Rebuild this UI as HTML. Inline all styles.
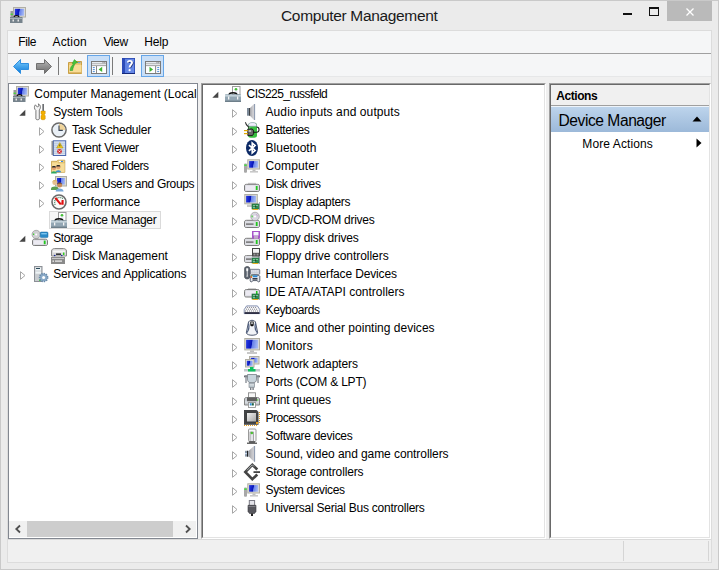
<!DOCTYPE html>
<html><head><meta charset="utf-8">
<style>
*{margin:0;padding:0;box-sizing:border-box}
html,body{width:719px;height:570px;overflow:hidden;background:#ebebeb}
body{position:relative;font-family:"Liberation Sans",sans-serif;color:#000}
.a{position:absolute}
.t{position:absolute;white-space:nowrap;font-size:12px;line-height:18px;height:18px;color:#000}
svg{position:absolute;overflow:visible}
</style></head><body>
<svg width="0" height="0" style="position:absolute;left:0;top:0"><defs>
<linearGradient id="scr" x1="0" y1="0" x2="1" y2="0.12"><stop offset="0" stop-color="#2a3ee0"/><stop offset="0.25" stop-color="#1828d0"/><stop offset="0.5" stop-color="#0614b4"/><stop offset="0.56" stop-color="#6680ea"/><stop offset="1" stop-color="#a4b8f4"/></linearGradient>
</defs></svg>
<!-- outer frame -->
<div class="a" style="left:0;top:0;width:719px;height:570px;border:1px solid #c9c9c9;background:#ebebeb"></div>
<!-- app icon -->
<svg style="left:10px;top:7px" width="16" height="16" viewBox="0 0 16 16"><rect x="3.5" y="0.5" width="12" height="9.5" fill="#e2e0d6" stroke="#b0aea4"/>
<rect x="4.8" y="1.8" width="9.4" height="6.9" fill="url(#scr)"/>
<rect x="0.5" y="4" width="2.5" height="6" fill="#9a9a9a"/><rect x="0.6" y="6.6" width="2.3" height="1.4" fill="#49d23c"/>
<path d="M4 10.5C4 8 9 8 9 10.5" fill="none" stroke="#111" stroke-width="1.2"/>
<rect x="0" y="10" width="12.5" height="6" fill="#76838c"/><rect x="0" y="11" width="12.5" height="1" fill="#a8b2b8"/>
<rect x="2.5" y="12.5" width="1.5" height="2" fill="#e6e6e6"/><rect x="7.5" y="12.5" width="1.5" height="2" fill="#e6e6e6"/></svg>
<div class="t" style="left:281px;top:5.5px;font-size:15.5px;font-weight:400;line-height:20px;height:20px;color:#1a1a1a;letter-spacing:-0.334px">Computer Management</div>
<!-- window buttons -->
<div class="a" style="left:623px;top:13px;width:9px;height:2px;background:#111"></div>
<div class="a" style="left:649px;top:7px;width:10px;height:9px;border:1px solid #111;border-top-width:2px"></div>
<div class="a" style="left:667px;top:1px;width:45px;height:20px;background:#bababa"></div>
<svg style="left:686px;top:8px" width="8" height="8" viewBox="0 0 8 8"><path d="M0.5 0.5L7.5 7.5M7.5 0.5L0.5 7.5" stroke="#fff" stroke-width="1.3"/></svg>

<!-- menu bar -->
<div class="a" style="left:7px;top:30px;width:705px;height:533px;background:#f0f0f0;border:1px solid #dcdcdc"></div>
<div class="a" style="left:8px;top:31px;width:703px;height:45px;background:#f5f6f7"></div>
<div class="a" style="left:8px;top:53px;width:703px;height:1px;background:#a0a0a0"></div>
<div class="a" style="left:8px;top:76px;width:703px;height:1px;background:#e6e7e8"></div>
<div class="t" style="left:18.3px;top:33px;font-size:12px;font-weight:400;line-height:18px;height:18px;color:#000;letter-spacing:-0.411px">File</div>
<div class="t" style="left:52.5px;top:33px;font-size:12px;font-weight:400;line-height:18px;height:18px;color:#000;letter-spacing:0.157px">Action</div>
<div class="t" style="left:103.4px;top:33px;font-size:12px;font-weight:400;line-height:18px;height:18px;color:#000;letter-spacing:-0.374px">View</div>
<div class="t" style="left:144.3px;top:33px;font-size:12px;font-weight:400;line-height:18px;height:18px;color:#000;letter-spacing:-0.147px">Help</div>

<!-- toolbar -->
<svg style="left:13px;top:59px" width="16" height="15" viewBox="0 0 16 15">
 <defs><linearGradient id="gb" x1="0" y1="0" x2="0" y2="1"><stop offset="0" stop-color="#7fd0ff"/><stop offset="1" stop-color="#0a78d8"/></linearGradient></defs>
 <path d="M0.5 7.5L7.5 0.5V4.5H15.5V10.5H7.5V14.5Z" fill="url(#gb)" stroke="#2f8fe0" stroke-width="1"/>
</svg>
<svg style="left:36px;top:59px" width="16" height="15" viewBox="0 0 16 15">
 <defs><linearGradient id="gg" x1="0" y1="0" x2="0" y2="1"><stop offset="0" stop-color="#b8b8b8"/><stop offset="1" stop-color="#6a6a6a"/></linearGradient></defs>
 <path d="M15.5 7.5L8.5 0.5V4.5H0.5V10.5H8.5V14.5Z" fill="url(#gg)" stroke="#707070" stroke-width="1"/>
</svg>
<div class="a" style="left:58px;top:57px;width:1px;height:18px;background:#7a7a7a"></div>
<svg style="left:68px;top:59px" width="15" height="16" viewBox="0 0 15 16">
 <path d="M0.5 3.5H6L7 2.5H13.5V14.5H0.5Z" fill="#eec772" stroke="#c49838" stroke-width="0.9"/>
 <rect x="1" y="6" width="12.5" height="8" fill="#f8dc96"/><rect x="1" y="13.2" width="12.5" height="1" fill="#d8b060"/>
 <rect x="10" y="3.2" width="2.5" height="1" fill="#5a9ae0"/>
 <path d="M2 11.5C2.2 8.6 3.6 6.4 5.4 5.2L4.2 4.4L6.4 0.6L9.8 3.6L7.6 4.2C6.4 5.6 5 8.2 4.6 11.5Z" fill="#46c23c" stroke="#2a9a24" stroke-width="0.5"/>
</svg>
<div class="a" style="left:87px;top:55px;width:23px;height:22px;background:#c9dff7;border:1px solid #66a6e8"></div>
<svg style="left:91px;top:61px" width="16" height="13" viewBox="0 0 16 13">
 <rect x="0.5" y="0.5" width="15" height="12" fill="#fff" stroke="#7b7b7b"/>
 <rect x="1" y="1" width="14" height="1.5" fill="#e6eaee"/><rect x="1" y="2.5" width="14" height="0.8" fill="#8a8a8a"/>
 <rect x="11.5" y="1.2" width="1" height="1" fill="#777"/><rect x="13.3" y="1.2" width="1" height="1" fill="#777"/>
 <rect x="1" y="3.3" width="14" height="1" fill="#e6eaee"/><rect x="1" y="4.3" width="14" height="0.8" fill="#8a8a8a"/>
 <rect x="5" y="5" width="0.9" height="7.5" fill="#7b7b7b"/>
 <rect x="1.8" y="6.2" width="2" height="0.9" fill="#3a7fd0"/><rect x="1.8" y="8.2" width="2" height="0.9" fill="#3a7fd0"/><rect x="1.8" y="10.2" width="2" height="0.9" fill="#3a7fd0"/>
 <path d="M7.6 8.4L11.2 5.8V11Z" fill="#3cb52f"/>
</svg>
<div class="a" style="left:112px;top:57px;width:1px;height:18px;background:#7a7a7a"></div>
<svg style="left:122px;top:58px" width="13" height="16" viewBox="0 0 13 16">
 <defs><linearGradient id="gh" x1="0" y1="0" x2="1" y2="0"><stop offset="0" stop-color="#5a7ee0"/><stop offset="1" stop-color="#6a8ce8"/></linearGradient></defs>
 <rect x="0" y="0" width="13" height="16" fill="url(#gh)"/>
 <rect x="0" y="0" width="3" height="16" fill="#2d4cb8"/>
 <rect x="0" y="0" width="13" height="0.8" fill="#2a48b0"/><rect x="12.2" y="0" width="0.8" height="16" fill="#2a48b0"/>
 <rect x="0" y="15" width="13" height="1" fill="#14287a"/>
 <path d="M6.2 4.6C6.2 2.6 10.2 2.4 10.2 4.8C10.2 6.6 7.8 6.8 7.8 9.6" fill="none" stroke="#1a2a70" stroke-width="1.6" transform="translate(0.6 0.5)"/>
 <path d="M5.8 4.6C5.8 2.4 10 2.2 10 4.8C10 6.6 7.6 6.8 7.6 9.6" fill="none" stroke="#fff" stroke-width="1.9"/>
 <circle cx="7.6" cy="12.2" r="1.1" fill="#fff"/>
</svg>
<div class="a" style="left:141px;top:55px;width:23px;height:22px;background:#c9dff7;border:1px solid #66a6e8"></div>
<svg style="left:145px;top:61px" width="16" height="13" viewBox="0 0 16 13">
 <rect x="0.5" y="0.5" width="15" height="12" fill="#fff" stroke="#7b7b7b"/>
 <rect x="1" y="1" width="14" height="1.5" fill="#e6eaee"/><rect x="1" y="2.5" width="14" height="0.8" fill="#8a8a8a"/>
 <rect x="11.5" y="1.2" width="1" height="1" fill="#777"/><rect x="13.3" y="1.2" width="1" height="1" fill="#777"/>
 <rect x="1" y="3.3" width="14" height="1" fill="#e6eaee"/><rect x="1" y="4.3" width="14" height="0.8" fill="#8a8a8a"/>
 <rect x="10.2" y="5" width="0.9" height="7.5" fill="#7b7b7b"/>
 <rect x="12.2" y="6.2" width="2" height="0.9" fill="#3a7fd0"/><rect x="12.2" y="8.2" width="2" height="0.9" fill="#3a7fd0"/><rect x="12.2" y="10.2" width="2" height="0.9" fill="#3a7fd0"/>
 <path d="M4.5 5.8L8.1 8.4L4.5 11Z" fill="#3cb52f"/>
</svg>

<!-- gap band -->


<!-- LEFT PANE -->
<div class="a" style="left:8px;top:83px;width:190px;height:456px;background:#fff;border:1px solid #828790"></div>
<div class="a" style="left:9px;top:84px;width:188px;height:437px;overflow:hidden"><div class="a" style="left:-9px;top:-84px;width:719px;height:570px">

<svg style="left:13px;top:86px" width="16" height="16" viewBox="0 0 16 16"><rect x="3.5" y="0.5" width="12" height="9.5" fill="#e2e0d6" stroke="#b0aea4"/>
<rect x="4.8" y="1.8" width="9.4" height="6.9" fill="url(#scr)"/>
<rect x="0.5" y="4" width="2.5" height="6" fill="#9a9a9a"/><rect x="0.6" y="6.6" width="2.3" height="1.4" fill="#49d23c"/>
<path d="M4 10.5C4 8 9 8 9 10.5" fill="none" stroke="#111" stroke-width="1.2"/>
<rect x="0" y="10" width="12.5" height="6" fill="#76838c"/><rect x="0" y="11" width="12.5" height="1" fill="#a8b2b8"/>
<rect x="2.5" y="12.5" width="1.5" height="2" fill="#e6e6e6"/><rect x="7.5" y="12.5" width="1.5" height="2" fill="#e6e6e6"/></svg>
<div class="t" style="left:34.3px;top:85px;letter-spacing:0.008px">Computer Management (Local</div>
<svg style="left:19px;top:110px" width="7" height="6" viewBox="0 0 7 6"><path d="M0.3 5.8H6.3V-0.2Z" fill="#454545"/></svg>
<svg style="left:34px;top:104px" width="16" height="16" viewBox="0 0 16 16"><path d="M1.9 15V6.4C0.1 5.2 -0.1 2.4 1.4 0.8L3.3 3L5 1.8L4.3 -0.1C6.4 0.6 7.3 3.6 5.3 6V15C5.3 16 1.9 16 1.9 15Z" fill="#f4f4f4" stroke="#6c6c6c" stroke-width="0.9"/>
<rect x="8.4" y="0" width="1.5" height="7.2" fill="#5e6064"/>
<path d="M7 7.1H11.2V9.8L10.3 10.5V11L11.2 11.6V15C11.2 16 7 16 7 15V11.6L7.9 11V10.5L7 9.8Z" fill="#f2b000" stroke="#c88a00" stroke-width="0.5"/></svg>
<div class="t" style="left:53.2px;top:103px;letter-spacing:-0.137px">System Tools</div>
<svg style="left:39px;top:127px" width="6" height="9" viewBox="0 0 6 9"><path d="M0.5 0.7L5 4.5L0.5 8.3Z" fill="#fff" stroke="#a6a6a6" stroke-width="1"/></svg>
<svg style="left:51px;top:122px" width="16" height="16" viewBox="0 0 16 16"><circle cx="8" cy="8" r="7.1" fill="#eaf0f6" stroke="#6a6a6a" stroke-width="1.5"/>
<path d="M8 1.8A6.2 6.2 0 0 1 14.2 8H8Z" fill="#f0d49a"/>
<path d="M8 3.4V8.4H11.8" fill="none" stroke="#3a4658" stroke-width="1.1"/></svg>
<div class="t" style="left:72px;top:121px;letter-spacing:-0.218px">Task Scheduler</div>
<svg style="left:39px;top:145px" width="6" height="9" viewBox="0 0 6 9"><path d="M0.5 0.7L5 4.5L0.5 8.3Z" fill="#fff" stroke="#a6a6a6" stroke-width="1"/></svg>
<svg style="left:51px;top:140px" width="16" height="16" viewBox="0 0 16 16"><rect x="2.3" y="0.8" width="12.4" height="14.7" fill="#dde6f2" stroke="#4a66ae" stroke-width="1"/>
<path d="M3 3.2H14M3 5.2H14M3 7.2H14M3 9.2H14M3 11.2H14M3 13.2H14" stroke="#aabdd8" stroke-width="0.8"/>
<path d="M1.3 1.5V15" stroke="#404040" stroke-width="1.8" stroke-dasharray="1 1"/>
<path d="M8.8 2.6L12 8H5.6Z" fill="#f2cc1c" stroke="#a88a10" stroke-width="0.5"/><rect x="8.4" y="4.4" width="0.9" height="2" fill="#333"/>
<circle cx="8.5" cy="11.4" r="2.4" fill="#d22a2e"/><path d="M7.5 10.4L9.5 12.4M9.5 10.4L7.5 12.4" stroke="#fff" stroke-width="0.8"/></svg>
<div class="t" style="left:72px;top:139px;letter-spacing:-0.315px">Event Viewer</div>
<svg style="left:39px;top:163px" width="6" height="9" viewBox="0 0 6 9"><path d="M0.5 0.7L5 4.5L0.5 8.3Z" fill="#fff" stroke="#a6a6a6" stroke-width="1"/></svg>
<svg style="left:51px;top:158px" width="16" height="16" viewBox="0 0 16 16"><path d="M0.5 3.3H6L6.8 2.2H13.8V14.3H0.5Z" fill="#f2d386" stroke="#c29e48" stroke-width="0.8"/>
<rect x="1" y="5" width="12.5" height="9" fill="#f6dc98"/><rect x="6.8" y="4.6" width="7" height="0.6" fill="#c8a858"/>
<rect x="8" y="2.9" width="2" height="1.1" fill="#fff"/><rect x="10" y="2.9" width="2" height="1.1" fill="#3a88e0"/>
<path d="M4.5 14.3C4.5 11.5 10.2 11.5 10.2 14.3Z" fill="#3a90d0"/><circle cx="7.3" cy="9.2" r="2.1" fill="#e0a070"/><path d="M5.2 8.4C5.2 6.6 9.4 6.6 9.4 8.4Z" fill="#2a2a2a"/>
<path d="M0 15.6C0 12.6 5.8 12.6 5.8 15.6Z" fill="#2ea860"/><circle cx="2.9" cy="10.2" r="2.1" fill="#e0a070"/><path d="M0.8 9.4C0.8 7.6 5 7.6 5 9.4Z" fill="#2a2a2a"/></svg>
<div class="t" style="left:72px;top:157px;letter-spacing:-0.382px">Shared Folders</div>
<svg style="left:39px;top:181px" width="6" height="9" viewBox="0 0 6 9"><path d="M0.5 0.7L5 4.5L0.5 8.3Z" fill="#fff" stroke="#a6a6a6" stroke-width="1"/></svg>
<svg style="left:51px;top:176px" width="16" height="16" viewBox="0 0 16 16"><rect x="4.5" y="0.5" width="11" height="9.5" fill="#dcdbd2" stroke="#aeaca2"/><rect x="6" y="2" width="8" height="6.5" fill="url(#scr)"/>
<path d="M0 12.8C0 9.6 7.6 9.6 7.6 12.8V14H0Z" fill="#5e9e50"/><circle cx="3.9" cy="6.6" r="2.5" fill="#e6c090"/><path d="M1.4 6.2C1.4 3.4 6.4 3.4 6.4 6.2L5.6 5.2H2.2Z" fill="#d8b060"/>
<path d="M4.6 15.6C4.6 11.6 12.6 11.6 12.6 15.6Z" fill="#78a8d8"/><circle cx="8.6" cy="9" r="2.5" fill="#c88a58"/><path d="M6.1 8.6C6.1 5.8 11.1 5.8 11.1 8.6L10.3 7.6H6.9Z" fill="#3a2a20"/></svg>
<div class="t" style="left:72px;top:175px;letter-spacing:-0.323px">Local Users and Groups</div>
<svg style="left:39px;top:199px" width="6" height="9" viewBox="0 0 6 9"><path d="M0.5 0.7L5 4.5L0.5 8.3Z" fill="#fff" stroke="#a6a6a6" stroke-width="1"/></svg>
<svg style="left:51px;top:194px" width="16" height="16" viewBox="0 0 16 16"><circle cx="8" cy="8" r="7" fill="#fafaf8" stroke="#6a6a6a" stroke-width="1.6"/>
<path d="M4.2 10.8A5 5 0 0 1 11.8 4.6" fill="none" stroke="#3a7a5a" stroke-width="1.3" stroke-dasharray="0.9 0.9"/>
<path d="M4.3 3.8L9.8 10.4" stroke="#e01010" stroke-width="2.1"/><path d="M10.6 6H12.6V10.8H10.2Z" fill="#e01010"/></svg>
<div class="t" style="left:72px;top:193px;letter-spacing:-0.064px">Performance</div>

<div class="a" style="left:49px;top:211px;width:112px;height:18px;background:#f7f7f7;border:1px solid #dadada"></div>
<svg style="left:51px;top:212px" width="16" height="16" viewBox="0 0 16 16"><rect x="7.5" y="0.5" width="7.5" height="8" fill="#fff" stroke="#9b9b9b"/>
<rect x="9.5" y="2.5" width="3" height="6" fill="#ecebf4"/><circle cx="11" cy="3.3" r="1.3" fill="#47c238"/>
<path d="M4 9C4 6 12 6 12 9" fill="none" stroke="#111" stroke-width="1.4"/>
<rect x="0" y="8.3" width="16" height="7.7" rx="0.8" fill="#93a6b3"/><rect x="0" y="9" width="16" height="1.6" fill="#c4d2da"/>
<rect x="0" y="14.6" width="16" height="1.4" fill="#6e7f8a"/>
<rect x="3" y="10.5" width="1.3" height="3" fill="#f2f2f2"/><rect x="12" y="10.5" width="1.3" height="3" fill="#f2f2f2"/></svg>
<div class="t" style="left:72.5px;top:211px;letter-spacing:-0.241px">Device Manager</div>
<svg style="left:19px;top:236px" width="7" height="6" viewBox="0 0 7 6"><path d="M0.3 5.8H6.3V-0.2Z" fill="#454545"/></svg>
<svg style="left:32px;top:230px" width="16" height="16" viewBox="0 0 16 16"><circle cx="4.2" cy="4.5" r="4.2" fill="#cfcfd2" stroke="#8a8a8a" stroke-width="0.6"/><circle cx="4.2" cy="4.5" r="1" fill="#fff"/><rect x="1" y="3.5" width="1.2" height="1.5" fill="#40d030"/>
<rect x="8.2" y="2" width="7.8" height="5.6" rx="1" fill="#2a8ac8" stroke="#1a6aa0" stroke-width="0.5"/><rect x="9.3" y="3" width="5.5" height="1.4" fill="#7cc4ee"/>
<path d="M0.5 11C0.5 9.8 1.3 9.2 2.5 9.2H13.5C14.7 9.2 15.5 9.8 15.5 11V14C15.5 15 14.8 15.5 13.8 15.5H2.2C1.2 15.5 0.5 15 0.5 14Z" fill="#dcdde3" stroke="#7b7b7b"/>
<rect x="2" y="10.5" width="9.5" height="3.5" fill="#eceaf2"/><rect x="11.8" y="10.6" width="1.8" height="3.6" fill="#22c81e"/></svg>
<div class="t" style="left:53.2px;top:229px;letter-spacing:-0.376px">Storage</div>

<svg style="left:51px;top:248px" width="16" height="16" viewBox="0 0 16 16"><path d="M0.5 3C0.5 1.5 2 0.5 3.5 0.5H12.5C14 0.5 15.5 1.5 15.5 3V8H0.5Z" fill="#d8d8d8" stroke="#8a8a8a"/>
<rect x="2" y="2.5" width="12" height="2" fill="#f6f6f6"/><rect x="5" y="5.5" width="5" height="1.3" fill="#111"/>
<circle cx="3.7" cy="7.5" r="0.8" fill="#1a2aa0"/><circle cx="10.7" cy="7.5" r="0.8" fill="#1a2aa0"/><rect x="12" y="4.5" width="1.4" height="2.5" fill="#30d020"/>
<rect x="0" y="9" width="14" height="7" fill="#8a8a8a"/><rect x="1" y="10" width="12" height="1" fill="#c8c8c8"/><rect x="4" y="12.5" width="7" height="1.2" fill="#f0f0f0"/><rect x="1.5" y="12.5" width="1.5" height="1.3" fill="#f0f0f0"/></svg>
<div class="t" style="left:72px;top:247px;letter-spacing:-0.061px">Disk Management</div>
<svg style="left:20px;top:271px" width="6" height="9" viewBox="0 0 6 9"><path d="M0.5 0.7L5 4.5L0.5 8.3Z" fill="#fff" stroke="#a6a6a6" stroke-width="1"/></svg>
<svg style="left:34px;top:266px" width="16" height="16" viewBox="0 0 16 16"><rect x="0.5" y="0.5" width="7.5" height="15" fill="#c8ccd0" stroke="#8c9096"/>
<rect x="1.5" y="1.5" width="5.5" height="3" fill="#eef4f6"/><rect x="2" y="2" width="4" height="1" fill="#2a4a5a"/>
<rect x="1.5" y="5.5" width="5.5" height="2.2" fill="#eef4f6"/><rect x="5" y="13.5" width="2.5" height="1.4" fill="#40d030"/>
<circle cx="9.6" cy="11.5" r="4" fill="#8aaac8" stroke="#6a8aaa" stroke-width="1.6" stroke-dasharray="1.3 1"/><circle cx="9.6" cy="11.5" r="1.5" fill="#fff"/></svg>
<div class="t" style="left:53.2px;top:265px;letter-spacing:-0.138px">Services and Applications</div>
</div></div>
<!-- left scrollbar -->
<div class="a" style="left:9px;top:521px;width:187px;height:16px;background:#f0f0f0"></div>
<div class="a" style="left:27px;top:521px;width:146px;height:16px;background:#cdcdcd"></div>
<svg style="left:15px;top:525px" width="6" height="8" viewBox="0 0 6 8"><path d="M5 0.5L1.3 4L5 7.5" fill="none" stroke="#505050" stroke-width="1.8"/></svg>
<svg style="left:185px;top:525px" width="6" height="8" viewBox="0 0 6 8"><path d="M1 0.5L4.7 4L1 7.5" fill="none" stroke="#505050" stroke-width="1.8"/></svg>
<!-- MIDDLE PANE -->
<div class="a" style="left:201px;top:83px;width:345px;height:456px;background:#fff;border-left:1px solid #a0a0a0;border-top:1px solid #a0a0a0;border-right:1px solid #fff;border-bottom:1px solid #fff"></div>
<div class="a" style="left:202px;top:84px;width:343px;height:454px;border-left:1px solid #696969;border-top:1px solid #696969;border-right:1px solid #e3e3e3;border-bottom:1px solid #e3e3e3"></div>
<div class="a" style="left:203px;top:85px;width:341px;height:452px;overflow:hidden"><div class="a" style="left:-203px;top:-85px;width:719px;height:570px">
<svg style="left:212px;top:92px" width="7" height="6" viewBox="0 0 7 6"><path d="M0.3 5.8H6.3V-0.2Z" fill="#454545"/></svg>
<svg style="left:225px;top:86px" width="16" height="16" viewBox="0 0 16 16"><rect x="7.5" y="0.5" width="7.5" height="8" fill="#fff" stroke="#9b9b9b"/>
<rect x="9.5" y="2.5" width="3" height="6" fill="#ecebf4"/><circle cx="11" cy="3.3" r="1.3" fill="#47c238"/>
<path d="M4 9C4 6 12 6 12 9" fill="none" stroke="#111" stroke-width="1.4"/>
<rect x="0" y="8.3" width="16" height="7.7" rx="0.8" fill="#93a6b3"/><rect x="0" y="9" width="16" height="1.6" fill="#c4d2da"/>
<rect x="0" y="14.6" width="16" height="1.4" fill="#6e7f8a"/>
<rect x="3" y="10.5" width="1.3" height="3" fill="#f2f2f2"/><rect x="12" y="10.5" width="1.3" height="3" fill="#f2f2f2"/></svg>
<div class="t" style="left:246.5px;top:85px;letter-spacing:-0.535px">CIS225_russfeld</div>
<svg style="left:232px;top:109px" width="6" height="9" viewBox="0 0 6 9"><path d="M0.5 0.7L5 4.5L0.5 8.3Z" fill="#fff" stroke="#a6a6a6" stroke-width="1"/></svg>
<svg style="left:244px;top:104px" width="16" height="16" viewBox="0 0 16 16"><defs><linearGradient id="spk" x1="0" y1="0" x2="1" y2="0"><stop offset="0" stop-color="#a4a4a8"/><stop offset="0.5" stop-color="#c8c8cc"/><stop offset="1" stop-color="#d8d8dc"/></linearGradient></defs>
<rect x="3" y="4" width="3" height="7.7" fill="#7d8a98"/><rect x="5.3" y="4" width="0.8" height="7.7" fill="#222"/>
<path d="M6 4L10 0H11V16H10L6 11.7Z" fill="url(#spk)"/><rect x="10.2" y="0" width="0.9" height="16" fill="#8090a8"/></svg>
<div class="t" style="left:265.5px;top:103px;letter-spacing:0.095px">Audio inputs and outputs</div>
<svg style="left:232px;top:127px" width="6" height="9" viewBox="0 0 6 9"><path d="M0.5 0.7L5 4.5L0.5 8.3Z" fill="#fff" stroke="#a6a6a6" stroke-width="1"/></svg>
<svg style="left:244px;top:122px" width="16" height="16" viewBox="0 0 16 16"><path d="M4 3.5C4 1.2 6 0.5 8.5 0.5C11 0.5 13 1.2 13 3.5V13.5C13 15.5 11 15.8 8.5 15.8C6 15.8 4 15.5 4 13.5Z" fill="#38c040"/>
<path d="M4.3 4.2C4.3 1.3 6 0.6 8.5 0.6C11 0.6 12.7 1.3 12.7 4.2Z" fill="#f0eefa" stroke="#8a8ab0" stroke-width="0.5"/>
<rect x="5" y="5" width="1.2" height="9" fill="#8ae08a"/>
<path d="M1.4 0.3C1.6 2.6 3.2 3.8 5.2 5.6" fill="none" stroke="#2a2a2a" stroke-width="1.1"/>
<path d="M9 10.2H12.8C15.8 10.2 15.8 5 12.6 5" fill="none" stroke="#1a1a1a" stroke-width="1.1"/>
<path d="M3.8 7H8.4L9.6 8.8V11.8L8.4 13.6H3.8Z" fill="#6a6a6a" stroke="#111" stroke-width="0.9"/><rect x="4.6" y="8" width="2.5" height="2" fill="#b8b8b8"/>
<rect x="0" y="8" width="3.8" height="1.2" fill="#e2a800"/><rect x="0" y="11" width="3.8" height="1.2" fill="#e2a800"/></svg>
<div class="t" style="left:265.5px;top:121px;letter-spacing:-0.384px">Batteries</div>
<svg style="left:232px;top:145px" width="6" height="9" viewBox="0 0 6 9"><path d="M0.5 0.7L5 4.5L0.5 8.3Z" fill="#fff" stroke="#a6a6a6" stroke-width="1"/></svg>
<svg style="left:244px;top:140px" width="16" height="16" viewBox="0 0 16 16"><ellipse cx="8" cy="8" rx="6" ry="8" fill="#0c2a66"/>
<path d="M4.9 5.2L11.1 10.4L8.2 13V3L11.1 5.6L4.9 10.8" fill="none" stroke="#fff" stroke-width="1.6"/></svg>
<div class="t" style="left:265.5px;top:139px;letter-spacing:0.020px">Bluetooth</div>
<svg style="left:232px;top:163px" width="6" height="9" viewBox="0 0 6 9"><path d="M0.5 0.7L5 4.5L0.5 8.3Z" fill="#fff" stroke="#a6a6a6" stroke-width="1"/></svg>
<svg style="left:244px;top:158px" width="16" height="16" viewBox="0 0 16 16"><rect x="3.8" y="1.8" width="11.7" height="9.2" fill="#e2e0d6" stroke="#b0aea4"/>
<rect x="5.1" y="3.1" width="9.1" height="6.6" fill="url(#scr)"/><rect x="0" y="5.5" width="3" height="9.2" rx="1" fill="#a8a8a8"/><rect x="0.3" y="6.5" width="2.4" height="1.4" fill="#3ee23a"/>
<rect x="8.5" y="11.5" width="3" height="1.5" fill="#bdbdbd"/><rect x="6" y="13" width="8" height="1.6" fill="#c8c8c8"/></svg>
<div class="t" style="left:265.5px;top:157px;letter-spacing:0.127px">Computer</div>
<svg style="left:232px;top:181px" width="6" height="9" viewBox="0 0 6 9"><path d="M0.5 0.7L5 4.5L0.5 8.3Z" fill="#fff" stroke="#a6a6a6" stroke-width="1"/></svg>
<svg style="left:244px;top:176px" width="16" height="16" viewBox="0 0 16 16"><rect x="4" y="6.8" width="8" height="1.6" fill="#d0d0d0"/><path d="M0.5 10C0.5 8.8 1.3 8.3 2.5 8.3H13.5C14.7 8.3 15.5 8.8 15.5 10V14C15.5 15 14.8 15.5 13.8 15.5H2.2C1.2 15.5 0.5 15 0.5 14Z" fill="#dcdde3" stroke="#7b7b7b"/>
<rect x="2" y="9.6" width="9.5" height="4.4" fill="#eceaf2"/><rect x="11.8" y="10" width="1.8" height="4" fill="#22c81e"/></svg>
<div class="t" style="left:265.5px;top:175px;letter-spacing:-0.326px">Disk drives</div>
<svg style="left:232px;top:199px" width="6" height="9" viewBox="0 0 6 9"><path d="M0.5 0.7L5 4.5L0.5 8.3Z" fill="#fff" stroke="#a6a6a6" stroke-width="1"/></svg>
<svg style="left:244px;top:194px" width="16" height="16" viewBox="0 0 16 16"><rect x="0.8" y="0.5" width="12.5" height="9.3" fill="#e2e0d6" stroke="#b0aea4"/>
<rect x="2.1" y="1.8" width="9.9" height="6.700000000000001" fill="url(#scr)"/><rect x="3" y="10.5" width="5" height="2.5" fill="#c8c8c8"/><rect x="8" y="10" width="7.3" height="5" fill="#2f8f52" stroke="#1d5f35" stroke-width="0.6"/>
<rect x="8.5" y="15" width="5.5" height="1" fill="#e8b020"/><rect x="15.2" y="8" width="0.8" height="8" fill="#9aa0b0"/>
<circle cx="10" cy="11.5" r="0.6" fill="#dfe"/><circle cx="13" cy="11.5" r="0.6" fill="#dfe"/><circle cx="10" cy="13.7" r="0.6" fill="#dfe"/><circle cx="11.7" cy="12.6" r="0.6" fill="#401020"/></svg>
<div class="t" style="left:265.5px;top:193px;letter-spacing:-0.287px">Display adapters</div>
<svg style="left:232px;top:217px" width="6" height="9" viewBox="0 0 6 9"><path d="M0.5 0.7L5 4.5L0.5 8.3Z" fill="#fff" stroke="#a6a6a6" stroke-width="1"/></svg>
<svg style="left:244px;top:212px" width="16" height="16" viewBox="0 0 16 16"><path d="M0.5 10C0.5 8.8 1.3 8.3 2.5 8.3H13.5C14.7 8.3 15.5 8.8 15.5 10V14C15.5 15 14.8 15.5 13.8 15.5H2.2C1.2 15.5 0.5 15 0.5 14Z" fill="#dcdde3" stroke="#7b7b7b"/>
<rect x="2" y="11.5" width="7.5" height="1.2" fill="#5a5a5a"/><rect x="11.8" y="10" width="1.8" height="4" fill="#22c81e"/>
<circle cx="11" cy="4.5" r="4.3" fill="#d8d6e0" stroke="#8a8a8a" stroke-width="0.6"/><circle cx="11" cy="4.5" r="1" fill="#fff"/><rect x="7.5" y="3.5" width="1.2" height="1.8" fill="#40d030"/><path d="M12 2L14 4.5" stroke="#c8a0d0" stroke-width="0.8"/></svg>
<div class="t" style="left:265.5px;top:211px;letter-spacing:-0.256px">DVD/CD-ROM drives</div>
<svg style="left:232px;top:235px" width="6" height="9" viewBox="0 0 6 9"><path d="M0.5 0.7L5 4.5L0.5 8.3Z" fill="#fff" stroke="#a6a6a6" stroke-width="1"/></svg>
<svg style="left:244px;top:230px" width="16" height="16" viewBox="0 0 16 16"><path d="M0.5 10C0.5 8.8 1.3 8.3 2.5 8.3H13.5C14.7 8.3 15.5 8.8 15.5 10V14C15.5 15 14.8 15.5 13.8 15.5H2.2C1.2 15.5 0.5 15 0.5 14Z" fill="#dcdde3" stroke="#7b7b7b"/>
<rect x="2" y="11.5" width="7.5" height="1.2" fill="#5a5a5a"/><rect x="11.8" y="10" width="1.8" height="4" fill="#22c81e"/>
<rect x="8" y="1" width="8" height="7.7" fill="#a655c8"/><rect x="9.5" y="2" width="5" height="3.5" fill="#f4f6fc"/><rect x="10" y="6" width="4" height="2.7" fill="#c0a8c8"/></svg>
<div class="t" style="left:265.5px;top:229px;letter-spacing:-0.164px">Floppy disk drives</div>
<svg style="left:232px;top:253px" width="6" height="9" viewBox="0 0 6 9"><path d="M0.5 0.7L5 4.5L0.5 8.3Z" fill="#fff" stroke="#a6a6a6" stroke-width="1"/></svg>
<svg style="left:244px;top:248px" width="16" height="16" viewBox="0 0 16 16"><path d="M0.5 9C0.5 7.8 1.3 7.5 2.5 7.5H13C14.2 7.5 15 8 15 9V13C15 14 14.3 14.5 13.3 14.5H2.2C1.2 14.5 0.5 14 0.5 13Z" fill="#dcdde3" stroke="#8b8b8b"/>
<rect x="2" y="10.5" width="5.5" height="1.2" fill="#5a5a5a"/>
<rect x="8" y="0" width="8" height="8.5" fill="#474747"/><rect x="9" y="1" width="6" height="3.8" fill="#f4f4f4"/><rect x="9.5" y="5.5" width="2" height="2" fill="#9a9a9a"/><rect x="12.5" y="5.5" width="2" height="2" fill="#9a9a9a"/><rect x="8" y="10" width="7.3" height="5" fill="#2f8f52" stroke="#1d5f35" stroke-width="0.6"/>
<rect x="8.5" y="15" width="5.5" height="1" fill="#e8b020"/><rect x="15.2" y="8" width="0.8" height="8" fill="#9aa0b0"/>
<circle cx="10" cy="11.5" r="0.6" fill="#dfe"/><circle cx="13" cy="11.5" r="0.6" fill="#dfe"/><circle cx="10" cy="13.7" r="0.6" fill="#dfe"/><circle cx="11.7" cy="12.6" r="0.6" fill="#401020"/></svg>
<div class="t" style="left:265.5px;top:247px;letter-spacing:-0.036px">Floppy drive controllers</div>
<svg style="left:232px;top:271px" width="6" height="9" viewBox="0 0 6 9"><path d="M0.5 0.7L5 4.5L0.5 8.3Z" fill="#fff" stroke="#a6a6a6" stroke-width="1"/></svg>
<svg style="left:244px;top:266px" width="16" height="16" viewBox="0 0 16 16"><rect x="6.3" y="3.3" width="9.4" height="5" rx="0.8" fill="#c8ccd8" stroke="#505868" stroke-width="0.7"/>
<path d="M7.3 5H15" stroke="#fff" stroke-width="1.1" stroke-dasharray="1.1 0.9"/><path d="M7.3 7.3H15" stroke="#f4f4f4" stroke-width="1" stroke-dasharray="1.3 0.7"/>
<path d="M0.6 2.5C0.6 -0.2 5.8 -0.2 5.8 2.5V11C5.8 13.6 0.6 13.6 0.6 11Z" fill="#5c6470" stroke="#30343c" stroke-width="0.6"/>
<path d="M2.2 2.2H4.2V4.5L3.6 5.5V9.5L4.2 10.5H2.2L2.8 9.5V5.5L2.2 4.5Z" fill="#fafafa"/>
<path d="M6.2 10.3C6.2 8.6 15.8 8.6 15.8 10.3V14.8C15.8 16.2 13.6 16.2 13.2 14.6H8.8C8.4 16.2 6.2 16.2 6.2 14.8Z" fill="#e4e8ee" stroke="#30384a" stroke-width="0.8"/>
<rect x="8.8" y="9.4" width="4.6" height="1.8" fill="#2a8ad8"/><circle cx="7.3" cy="11" r="0.9" fill="#e86020"/><circle cx="8" cy="9.8" r="0.6" fill="#60d040"/>
<rect x="8.5" y="12" width="5" height="1.6" fill="#383c48"/></svg>
<div class="t" style="left:265.5px;top:265px;letter-spacing:-0.149px">Human Interface Devices</div>
<svg style="left:232px;top:289px" width="6" height="9" viewBox="0 0 6 9"><path d="M0.5 0.7L5 4.5L0.5 8.3Z" fill="#fff" stroke="#a6a6a6" stroke-width="1"/></svg>
<svg style="left:244px;top:284px" width="16" height="16" viewBox="0 0 16 16"><rect x="4" y="4" width="8" height="1.6" fill="#d0d0d0"/>
<path d="M0.5 7.3C0.5 6 1.3 5.5 2.5 5.5H13.5C14.7 5.5 15.5 6 15.5 7.3V11.5C15.5 12.5 14.8 13 13.8 13H2.2C1.2 13 0.5 12.5 0.5 11.5Z" fill="#dcdde3" stroke="#7b7b7b"/>
<rect x="2" y="7" width="9.5" height="4.4" fill="#eceaf2"/><rect x="12" y="7" width="1.5" height="3" fill="#22c81e"/><rect x="8" y="10" width="7.3" height="5" fill="#2f8f52" stroke="#1d5f35" stroke-width="0.6"/>
<rect x="8.5" y="15" width="5.5" height="1" fill="#e8b020"/><rect x="15.2" y="8" width="0.8" height="8" fill="#9aa0b0"/>
<circle cx="10" cy="11.5" r="0.6" fill="#dfe"/><circle cx="13" cy="11.5" r="0.6" fill="#dfe"/><circle cx="10" cy="13.7" r="0.6" fill="#dfe"/><circle cx="11.7" cy="12.6" r="0.6" fill="#401020"/></svg>
<div class="t" style="left:265.5px;top:283px;letter-spacing:-0.006px">IDE ATA/ATAPI controllers</div>
<svg style="left:232px;top:307px" width="6" height="9" viewBox="0 0 6 9"><path d="M0.5 0.7L5 4.5L0.5 8.3Z" fill="#fff" stroke="#a6a6a6" stroke-width="1"/></svg>
<svg style="left:244px;top:302px" width="16" height="16" viewBox="0 0 16 16"><path d="M2.6 3.9H13.4L15.8 7.6V11.6H0.2V7.6Z" fill="#f4f4f6" stroke="#6a78a0" stroke-width="0.8"/><rect x="3" y="4.9" width="1" height="1" fill="#8a8a90"/><rect x="5" y="4.9" width="1" height="1" fill="#8a8a90"/><rect x="7" y="4.9" width="1" height="1" fill="#8a8a90"/><rect x="9" y="4.9" width="1" height="1" fill="#8a8a90"/><rect x="11" y="4.9" width="1" height="1" fill="#8a8a90"/><rect x="2" y="6.7" width="1" height="1" fill="#8a8a90"/><rect x="4" y="6.7" width="1" height="1" fill="#8a8a90"/><rect x="6" y="6.7" width="1" height="1" fill="#8a8a90"/><rect x="8" y="6.7" width="1" height="1" fill="#8a8a90"/><rect x="10" y="6.7" width="1" height="1" fill="#8a8a90"/><rect x="12" y="6.7" width="1" height="1" fill="#8a8a90"/><rect x="1" y="8.5" width="1" height="1" fill="#8a8a90"/><rect x="3" y="8.5" width="1" height="1" fill="#8a8a90"/><rect x="5" y="8.5" width="1" height="1" fill="#8a8a90"/><rect x="7" y="8.5" width="1" height="1" fill="#8a8a90"/><rect x="9" y="8.5" width="1" height="1" fill="#8a8a90"/><rect x="11" y="8.5" width="1" height="1" fill="#8a8a90"/><rect x="13" y="8.5" width="1" height="1" fill="#8a8a90"/>
<rect x="0.6" y="10.2" width="14.8" height="1.6" fill="#14142a"/></svg>
<div class="t" style="left:265.5px;top:301px;letter-spacing:-0.353px">Keyboards</div>
<svg style="left:232px;top:325px" width="6" height="9" viewBox="0 0 6 9"><path d="M0.5 0.7L5 4.5L0.5 8.3Z" fill="#fff" stroke="#a6a6a6" stroke-width="1"/></svg>
<svg style="left:244px;top:320px" width="16" height="16" viewBox="0 0 16 16"><path d="M4.3 3C4.3 -0.6 11.7 -0.6 11.7 3L13.6 12.4C14.2 16.2 1.8 16.2 2.4 12.4Z" fill="#f2f4f8" stroke="#3a4660" stroke-width="0.9"/>
<path d="M4.5 3.5C5.5 7 5 10 2.6 13" fill="none" stroke="#4a5a7c" stroke-width="1.2"/><path d="M11.5 3.5C10.5 7 11 10 13.4 13" fill="none" stroke="#4a5a7c" stroke-width="1.2"/>
<path d="M6.3 1.6H9.7V5C9.7 6.8 6.3 6.8 6.3 5Z" fill="#111"/><rect x="7.3" y="2.2" width="1.4" height="2" fill="#f0f0f0"/></svg>
<div class="t" style="left:265.5px;top:319px;letter-spacing:0.010px">Mice and other pointing devices</div>
<svg style="left:232px;top:343px" width="6" height="9" viewBox="0 0 6 9"><path d="M0.5 0.7L5 4.5L0.5 8.3Z" fill="#fff" stroke="#a6a6a6" stroke-width="1"/></svg>
<svg style="left:244px;top:338px" width="16" height="16" viewBox="0 0 16 16"><rect x="0.8" y="0.5" width="14.7" height="11.4" fill="#e2e0d6" stroke="#b0aea4"/>
<rect x="2.1" y="1.8" width="12.1" height="8.8" fill="url(#scr)"/><rect x="6" y="12.4" width="4" height="1.6" fill="#bdbdbd"/><rect x="3" y="14" width="10" height="2" fill="#c8c8c8"/></svg>
<div class="t" style="left:265.5px;top:337px;letter-spacing:0.161px">Monitors</div>
<svg style="left:232px;top:361px" width="6" height="9" viewBox="0 0 6 9"><path d="M0.5 0.7L5 4.5L0.5 8.3Z" fill="#fff" stroke="#a6a6a6" stroke-width="1"/></svg>
<svg style="left:244px;top:356px" width="16" height="16" viewBox="0 0 16 16"><rect x="5.5" y="0.5" width="9.5" height="7.5" fill="#e2e0d6" stroke="#b0aea4"/>
<rect x="6.8" y="1.8" width="6.9" height="4.9" fill="url(#scr)"/><rect x="1.5" y="3.5" width="8.5" height="7.5" fill="#e2e0d6" stroke="#b0aea4"/>
<rect x="2.8" y="4.8" width="5.9" height="4.9" fill="url(#scr)"/><rect x="0" y="13" width="16" height="2.5" fill="#c4c8cc"/>
<rect x="6" y="11" width="3.5" height="3" fill="#10c060"/><rect x="4" y="13" width="7.5" height="2.5" fill="#10c060"/></svg>
<div class="t" style="left:265.5px;top:355px;letter-spacing:-0.109px">Network adapters</div>
<svg style="left:232px;top:379px" width="6" height="9" viewBox="0 0 6 9"><path d="M0.5 0.7L5 4.5L0.5 8.3Z" fill="#fff" stroke="#a6a6a6" stroke-width="1"/></svg>
<svg style="left:244px;top:374px" width="16" height="16" viewBox="0 0 16 16"><rect x="0" y="1.5" width="16" height="1.8" fill="#6a6e74"/>
<rect x="1.3" y="1" width="1.4" height="8" fill="#8a9098"/><rect x="13.3" y="1" width="1.4" height="8" fill="#8a9098"/>
<path d="M3.5 0.5H12.5V5C12.5 8 11 8.8 8 8.8C5 8.8 3.5 8 3.5 5Z" fill="#c8d4dc" stroke="#7a8088" stroke-width="0.8"/>
<rect x="5" y="9" width="5.5" height="4.5" fill="#b8c4cc" stroke="#7a8088" stroke-width="0.6"/><rect x="5.5" y="10.5" width="4.5" height="0.8" fill="#eee"/>
<rect x="6" y="13.5" width="1.4" height="2.5" fill="#7a8088"/><rect x="8.4" y="13.5" width="1.4" height="2.5" fill="#7a8088"/></svg>
<div class="t" style="left:265.5px;top:373px;letter-spacing:-0.183px">Ports (COM &amp; LPT)</div>
<svg style="left:232px;top:397px" width="6" height="9" viewBox="0 0 6 9"><path d="M0.5 0.7L5 4.5L0.5 8.3Z" fill="#fff" stroke="#a6a6a6" stroke-width="1"/></svg>
<svg style="left:244px;top:392px" width="16" height="16" viewBox="0 0 16 16"><rect x="4.5" y="0.8" width="7" height="5" fill="#f6f6f6" stroke="#8a8a8a" stroke-width="0.9"/>
<path d="M0.5 7C0.5 6 1.5 5.5 2.5 5.5H13.5C14.5 5.5 15.5 6 15.5 7V13H0.5Z" fill="#c8ccd0" stroke="#7a7a7a" stroke-width="0.9"/>
<rect x="3" y="5.5" width="10" height="4" fill="#5e5e5e"/><rect x="1" y="9.5" width="14" height="1" fill="#e4e8ec"/><circle cx="13.5" cy="8" r="0.8" fill="#60e040"/>
<rect x="4.5" y="10.5" width="7" height="5" fill="#fff" stroke="#8a8a8a" stroke-width="0.8"/><rect x="5.8" y="11.2" width="1.8" height="2.3" fill="#2a90e0"/><rect x="7.8" y="11.2" width="2" height="2.3" fill="#1a6040"/></svg>
<div class="t" style="left:265.5px;top:391px;letter-spacing:-0.174px">Print queues</div>
<svg style="left:232px;top:415px" width="6" height="9" viewBox="0 0 6 9"><path d="M0.5 0.7L5 4.5L0.5 8.3Z" fill="#fff" stroke="#a6a6a6" stroke-width="1"/></svg>
<svg style="left:244px;top:410px" width="16" height="16" viewBox="0 0 16 16"><path d="M0 0H12.5L14.5 2V14.7H0Z" fill="#3c3e40"/><rect x="1" y="1" width="12" height="12.5" fill="none" stroke="#555" stroke-width="0.5"/>
<defs><linearGradient id="cpug" x1="0" y1="0" x2="1" y2="1"><stop offset="0" stop-color="#f0f0f0"/><stop offset="1" stop-color="#a8a8a8"/></linearGradient></defs>
<rect x="3" y="3" width="9" height="8.5" fill="url(#cpug)"/><rect x="12" y="12" width="2" height="2" fill="#e8a020"/>
<path d="M15.5 2V13" stroke="#e8a020" stroke-width="1" stroke-dasharray="1 1"/><path d="M0 15.5H13" stroke="#e8a020" stroke-width="1" stroke-dasharray="1 1"/></svg>
<div class="t" style="left:265.5px;top:409px;letter-spacing:-0.503px">Processors</div>
<svg style="left:232px;top:433px" width="6" height="9" viewBox="0 0 6 9"><path d="M0.5 0.7L5 4.5L0.5 8.3Z" fill="#fff" stroke="#a6a6a6" stroke-width="1"/></svg>
<svg style="left:244px;top:428px" width="16" height="16" viewBox="0 0 16 16"><rect x="4.5" y="1" width="7.5" height="12.5" rx="1" fill="#f8f8fa" stroke="#9a9a9a"/>
<rect x="6" y="4" width="3.5" height="9.5" fill="#e4e4ea" stroke="#777" stroke-width="0.6"/><circle cx="7.8" cy="5" r="1.3" fill="#4ac030"/>
<rect x="5" y="13.5" width="6" height="1.2" fill="#333"/><rect x="3" y="14.6" width="10" height="1.2" fill="#444"/></svg>
<div class="t" style="left:265.5px;top:427px;letter-spacing:-0.274px">Software devices</div>
<svg style="left:232px;top:451px" width="6" height="9" viewBox="0 0 6 9"><path d="M0.5 0.7L5 4.5L0.5 8.3Z" fill="#fff" stroke="#a6a6a6" stroke-width="1"/></svg>
<svg style="left:244px;top:446px" width="16" height="16" viewBox="0 0 16 16"><defs><linearGradient id="spk2" x1="0" y1="0" x2="1" y2="0"><stop offset="0" stop-color="#9c9ca0"/><stop offset="0.5" stop-color="#c4c4c8"/><stop offset="1" stop-color="#d4d4d8"/></linearGradient></defs>
<rect x="1" y="4.8" width="3.8" height="5.8" fill="#8a98a8"/><rect x="1" y="7" width="2" height="1.2" fill="#c8d8f0"/><rect x="3" y="4.8" width="1" height="5.8" fill="#222"/>
<path d="M4.8 4.8L10 0H11V15.7H10L4.8 10.6Z" fill="url(#spk2)"/><rect x="10.2" y="0" width="0.9" height="15.7" fill="#8090a8"/></svg>
<div class="t" style="left:265.5px;top:445px;letter-spacing:-0.074px">Sound, video and game controllers</div>
<svg style="left:232px;top:469px" width="6" height="9" viewBox="0 0 6 9"><path d="M0.5 0.7L5 4.5L0.5 8.3Z" fill="#fff" stroke="#a6a6a6" stroke-width="1"/></svg>
<svg style="left:244px;top:464px" width="16" height="16" viewBox="0 0 16 16"><path d="M13.3 5.5L8.3 0.8L1.3 8L8.3 15.2L13.3 10.5" fill="none" stroke="#444" stroke-width="2.6"/>
<path d="M3 6.3L8.3 0.8L10 2.5" fill="none" stroke="#b0b6ba" stroke-width="1"/>
<rect x="9.5" y="7.2" width="6.5" height="1.8" fill="#444"/></svg>
<div class="t" style="left:265.5px;top:463px;letter-spacing:-0.148px">Storage controllers</div>
<svg style="left:232px;top:487px" width="6" height="9" viewBox="0 0 6 9"><path d="M0.5 0.7L5 4.5L0.5 8.3Z" fill="#fff" stroke="#a6a6a6" stroke-width="1"/></svg>
<svg style="left:244px;top:482px" width="16" height="16" viewBox="0 0 16 16"><rect x="3.8" y="1.8" width="11.7" height="9.2" fill="#e2e0d6" stroke="#b0aea4"/>
<rect x="5.1" y="3.1" width="9.1" height="6.6" fill="url(#scr)"/><rect x="0" y="5.5" width="3" height="9.2" rx="1" fill="#a8a8a8"/><rect x="0.3" y="6.5" width="2.4" height="1.4" fill="#3ee23a"/>
<rect x="8.5" y="11.5" width="3" height="1.5" fill="#bdbdbd"/><rect x="6" y="13" width="8" height="1.6" fill="#c8c8c8"/></svg>
<div class="t" style="left:265.5px;top:481px;letter-spacing:-0.345px">System devices</div>
<svg style="left:232px;top:505px" width="6" height="9" viewBox="0 0 6 9"><path d="M0.5 0.7L5 4.5L0.5 8.3Z" fill="#fff" stroke="#a6a6a6" stroke-width="1"/></svg>
<svg style="left:244px;top:500px" width="16" height="16" viewBox="0 0 16 16"><rect x="5.3" y="0.5" width="5.3" height="5" fill="#e4e4ea" stroke="#7a7a84"/>
<path d="M4 5.3H12V11.5L10.5 13.5H5.5L4 11.5Z" fill="#58585e" stroke="#3a3a40" stroke-width="0.6"/><rect x="4.5" y="6" width="7" height="0.8" fill="#8a8a90"/>
<rect x="7" y="13.5" width="2" height="2.5" fill="#222"/></svg>
<div class="t" style="left:265.5px;top:499px;letter-spacing:-0.239px">Universal Serial Bus controllers</div>
</div></div>
<!-- RIGHT PANE -->
<div class="a" style="left:549px;top:83px;width:162px;height:456px;background:#fff;border-left:1px solid #a0a0a0;border-top:1px solid #a0a0a0;border-right:1px solid #fff;border-bottom:1px solid #fff"></div>
<div class="a" style="left:550px;top:84px;width:160px;height:454px;border-left:1px solid #696969;border-top:1px solid #696969;border-right:1px solid #e3e3e3;border-bottom:1px solid #e3e3e3"></div>
<div class="a" style="left:551px;top:85px;width:158px;height:20px;background:#f0f0f0"></div>
<div class="a" style="left:551px;top:105px;width:158px;height:1px;background:#a0a0a0"></div>
<div class="a" style="left:551px;top:106px;width:158px;height:1px;background:#eef4fa"></div>
<div class="a" style="left:551px;top:107px;width:158px;height:25px;background:linear-gradient(#bdd4ec,#9cb9d9)"></div>
<div class="t" style="left:556.2px;top:87px;font-size:12px;font-weight:700;line-height:18px;height:18px;color:#000;letter-spacing:-0.431px">Actions</div>
<div class="t" style="left:558.5px;top:111px;font-size:15.6px;font-weight:400;line-height:20px;height:20px;color:#000;letter-spacing:-0.446px">Device Manager</div>
<svg style="left:692px;top:116px" width="10" height="6" viewBox="0 0 10 6"><path d="M0.5 5.5L5 0.5L9.5 5.5Z" fill="#000"/></svg>
<div class="t" style="left:582.3px;top:135px;font-size:12px;font-weight:400;line-height:18px;height:18px;color:#000;letter-spacing:0.102px">More Actions</div>
<svg style="left:696px;top:138px" width="6" height="10" viewBox="0 0 6 10"><path d="M0.5 0.5L5.5 5L0.5 9.5Z" fill="#000"/></svg>

<!-- status bar -->
<div class="a" style="left:8px;top:539px;width:703px;height:1px;background:#dadada"></div>
<div class="a" style="left:623px;top:541px;width:1px;height:20px;background:#d5d5d5"></div>
<div class="a" style="left:708px;top:541px;width:1px;height:20px;background:#d5d5d5"></div>

</body></html>
